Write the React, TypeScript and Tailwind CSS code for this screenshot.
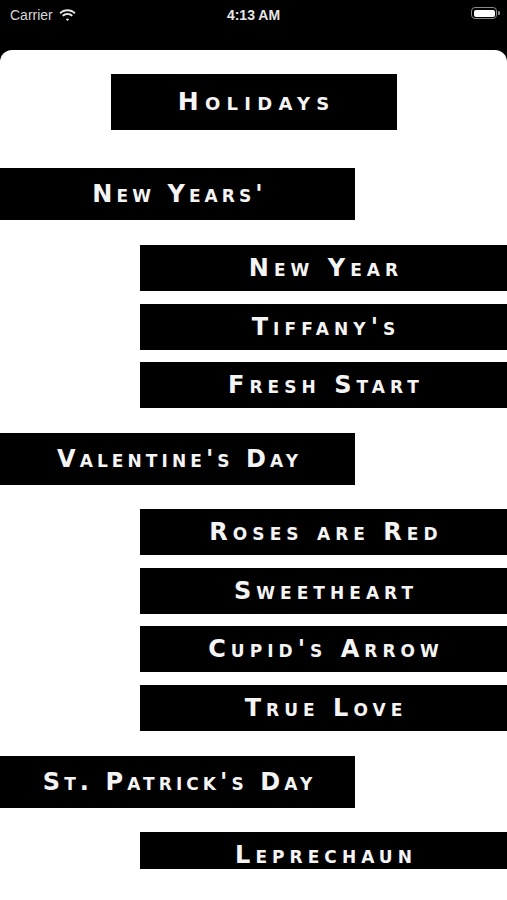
import React from "react";

type Section = {
  title: string;
  items: string[];
  gapBefore: string;
  gapAfter: string;
};

const sections: Section[] = [
  {
    title: "New Years'",
    items: ["New Year", "Tiffany's", "Fresh Start"],
    gapBefore: "mt-[38px]",
    gapAfter: "mt-[25px]",
  },
  {
    title: "Valentine's Day",
    items: ["Roses are Red", "Sweetheart", "Cupid's Arrow", "True Love"],
    gapBefore: "mt-[24.6px]",
    gapAfter: "mt-[24px]",
  },
  {
    title: "St. Patrick's Day",
    items: ["Leprechaun"],
    gapBefore: "mt-[25px]",
    gapAfter: "mt-[24px]",
  },
];

const plateFont = {
  fontFamily: '"DejaVu Sans", sans-serif',
};

const StatusBar: React.FC = () => (
  <div className="relative h-[50px] shrink-0 text-white">
    <div className="absolute left-[10px] top-[5px] flex items-center gap-[6px] font-['Liberation_Sans',sans-serif] text-[14px] text-[#d8d8d8]">
      <span>Carrier</span>
      <svg width="17" height="13" viewBox="0 0 17 13" fill="#e6e6e6">
        <path d="M8.5 2.2c2.6 0 5 1 6.8 2.7l1.3-1.4C14.4 1.4 11.6.2 8.5.2S2.6 1.4.4 3.5l1.3 1.4C3.5 3.2 5.9 2.2 8.5 2.2z" />
        <path d="M8.5 6c1.6 0 3 .6 4.1 1.6l1.3-1.4C12.5 4.9 10.6 4 8.5 4S4.5 4.9 3.1 6.2l1.3 1.4C5.5 6.6 6.9 6 8.5 6z" />
        <path d="M8.5 9.6c.6 0 1.2.2 1.6.6l-1.6 1.7-1.6-1.7c.4-.4 1-.6 1.6-.6z" />
      </svg>
    </div>
    <div className="absolute left-0 right-0 top-[5px] text-center font-['Liberation_Sans',sans-serif] text-[14px] font-semibold text-[#e6e6e6]">
      4:13 AM
    </div>
    <div className="absolute right-[7px] top-[7px] flex items-center">
      <div className="flex h-[12px] w-[26px] items-center rounded-[4px] border border-[#888] p-[1.5px]">
        <div className="h-full w-full rounded-[2px] bg-white" />
      </div>
      <div className="ml-[1px] h-[4px] w-[2px] rounded-r-[1px] bg-[#888]" />
    </div>
  </div>
);

const Plate: React.FC<{ label: string; className: string; textClass: string }> = ({
  label,
  className,
  textClass,
}) => (
  <div className={`flex items-center justify-center bg-black ${className}`}>
    <span
      className={`whitespace-nowrap font-bold text-[#f4f4f4] [font-variant:small-caps] ${textClass}`}
      style={plateFont}
    >
      {label}
    </span>
  </div>
);

export default function App() {
  return (
    <div className="flex h-[900px] w-[507px] flex-col overflow-hidden bg-black">
      <StatusBar />
      <div className="flex flex-1 flex-col rounded-t-[12px] bg-white pt-[24px]">
        <Plate
          label="Holidays"
          className="h-[56px] w-[286px] self-center"
          textClass="text-[25px] tracking-[0.25em] pl-[0.25em]"
        />
        {sections.map((section) => (
          <div key={section.title} className={`flex flex-col ${section.gapBefore}`}>
            <Plate
              label={section.title}
              className="h-[52px] w-[355px]"
              textClass="text-[24px] tracking-[0.17em] pl-[0.17em]"
            />
            <div className={`flex flex-col gap-[12.7px] pl-[140px] ${section.gapAfter}`}>
              {section.items.map((item) =>
                item === "Leprechaun" ? (
                  <div key={item} className="h-[37px] overflow-hidden">
                    <Plate
                      label={item}
                      className="h-[46px] w-full"
                      textClass="text-[24px] tracking-[0.21em] pl-[0.21em]"
                    />
                  </div>
                ) : (
                  <Plate
                    key={item}
                    label={item}
                    className="h-[46px] w-full"
                    textClass="text-[24px] tracking-[0.21em] pl-[0.21em]"
                  />
                )
              )}
            </div>
          </div>
        ))}
      </div>
    </div>
  );
}
